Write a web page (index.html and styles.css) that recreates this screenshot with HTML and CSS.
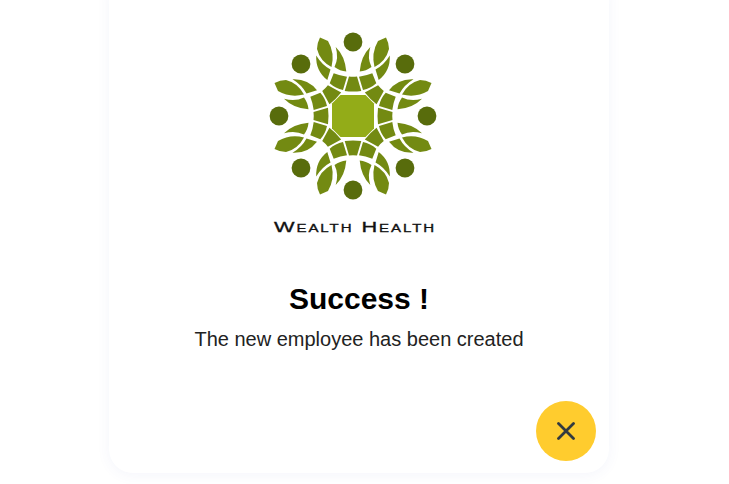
FILE: index.html
```html
<!DOCTYPE html>
<html lang="en">
<head>
<meta charset="utf-8">
<title>Success</title>
<link rel="stylesheet" href="styles.css">
</head>
<body>
<main class="stage">
  <section class="card">
    <svg class="logo" width="170" height="170" viewBox="-85 -85 170 170" role="img" aria-label="Wealth Health logo">
      <defs>
        <g id="half">
          <path class="leaf" d="M-33 -78.5 L-25 -75 Q-18 -63 -21.5 -49 Q-33 -55 -36 -67 Q-36 -73 -33 -78.5Z"/>
          <path class="leaf" d="M-17.3 -69 Q-8 -60 -6.7 -44.5 Q-13 -45 -18.5 -49 Q-14 -58 -17.3 -69Z"/>
          <path class="leaf" d="M-36.8 -60.5 Q-31 -51 -22.5 -46.5 L-25.7 -36 Q-37.5 -45 -36.8 -60.5Z"/>
          <path class="leaf" d="M-19.3 -42.7 Q-12.5 -40 -6 -39.3 L-10 -26 Q-17.5 -27.5 -23.3 -32.7Z"/>
        </g>
        <g id="group">
          <use href="#half"/>
          <use href="#half" transform="scale(-1 1)"/>
          <circle class="dot" cx="0" cy="-74" r="9.4"/>
          <circle class="dot" cx="-52" cy="-52" r="9.4"/>
        </g>
        <path id="wedge" class="leaf" d="M-4 -39.5 Q0 -39 4 -39.5 L8.3 -25 Q0 -24 -8.3 -25Z"/>
      </defs>
      <use href="#group"/>
      <use href="#group" transform="rotate(90)"/>
      <use href="#group" transform="rotate(180)"/>
      <use href="#group" transform="rotate(270)"/>
      <use href="#wedge"/>
      <use href="#wedge" transform="rotate(45)"/>
      <use href="#wedge" transform="rotate(90)"/>
      <use href="#wedge" transform="rotate(135)"/>
      <use href="#wedge" transform="rotate(180)"/>
      <use href="#wedge" transform="rotate(225)"/>
      <use href="#wedge" transform="rotate(270)"/>
      <use href="#wedge" transform="rotate(315)"/>
      <path class="core" d="M-12.5 -21 L12.5 -21 L21 -12.5 L21 12.5 L12.5 21 L-12.5 21 L-21 12.5 L-21 -12.5Z"/>
    </svg>
    <p class="brand">Wealth Health</p>
    <h1 class="title">Success !</h1>
    <p class="message">The new employee has been created</p>
    <button class="close" type="button" aria-label="Close">
      <svg width="18" height="18" viewBox="0 0 18 18"><path class="cross" d="M1.5 1.5 L16.5 16.5 M16.5 1.5 L1.5 16.5"/></svg>
    </button>
  </section>
</main>
</body>
</html>
```
FILE: styles.css
```css
html, body {
  margin: 0;
  height: 100%;
  background: #fff;
}
.stage {
  height: 484px;
  overflow: hidden;
  display: flex;
  justify-content: center;
  align-items: flex-end;
  padding: 0 11px 11px 0;
  box-sizing: border-box;
}
.card {
  position: relative;
  flex: none;
  width: 500px;
  height: 500px;
  border-radius: 24px;
  background: #fff;
  box-shadow: 0 2px 14px rgba(60, 90, 180, 0.06);
  display: flex;
  flex-direction: column;
  align-items: center;
  font-family: "Liberation Sans", sans-serif;
  color: #222;
}
.logo {
  display: block;
  margin: 58px 12px 0 0;
  flex: none;
}
.leaf { fill: #738a12; }
.dot { fill: #586c0c; }
.core { fill: #93ac18; }
.brand {
  margin: 18px 7px 0 0;
  font-variant: small-caps;
  font-size: 14.5px;
  line-height: 16px;
  letter-spacing: 1.3px;
  white-space: nowrap;
  color: #111;
  -webkit-text-stroke: 0.3px #111;
  transform: scaleX(1.5);
}
.title {
  margin: 46px 0 0;
  font-size: 30px;
  line-height: 36px;
  font-weight: 700;
  color: #000;
}
.message {
  margin: 9px 0 0;
  font-size: 20px;
  line-height: 26px;
  color: #222;
}
.close {
  position: absolute;
  right: 13px;
  bottom: 12px;
  width: 60px;
  height: 60px;
  padding: 0;
  border: 0;
  border-radius: 50%;
  background: #ffcc2e;
  display: flex;
  align-items: center;
  justify-content: center;
}
.cross {
  fill: none;
  stroke: #333a40;
  stroke-width: 2.8;
  stroke-linecap: round;
}
```
